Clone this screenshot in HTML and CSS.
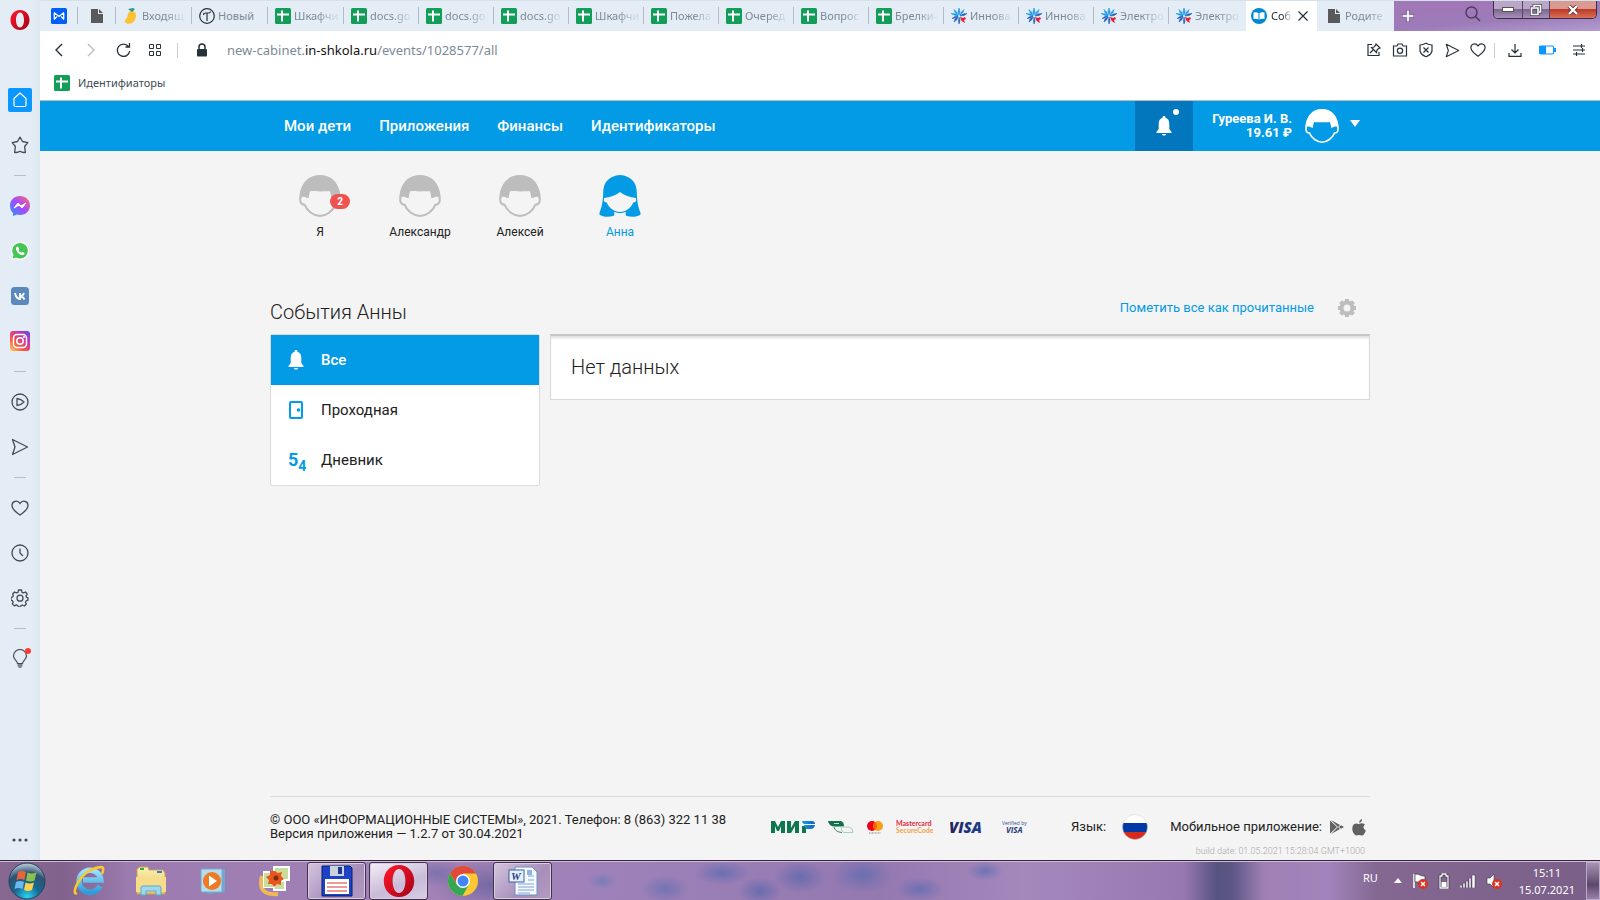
FILE: index.html
```html
<!DOCTYPE html>
<html lang="ru">
<head>
<meta charset="utf-8">
<title>События Анны</title>
<link rel="stylesheet" href="styles.css">
</head>
<body>
<svg class="defs" aria-hidden="true">
  <defs>
    <linearGradient id="g-opera" x1="0" y1="0" x2="1" y2="1"><stop offset="0" stop-color="#ff1b2d"/><stop offset="1" stop-color="#a70014"/></linearGradient>
    <linearGradient id="g-msg" x1="0" y1="1" x2="1" y2="0"><stop offset="0" stop-color="#1e9bff"/><stop offset=".5" stop-color="#a34bff"/><stop offset="1" stop-color="#ff6b6b"/></linearGradient>
    <linearGradient id="g-insta" x1="0" y1="1" x2=".9" y2="0"><stop offset="0" stop-color="#ffd25a"/><stop offset=".35" stop-color="#f9583f"/><stop offset=".7" stop-color="#c837ab"/><stop offset="1" stop-color="#6a4be0"/></linearGradient>
    <linearGradient id="g-mir" x1="0" x2="1"><stop offset="0" stop-color="#17a0e0"/><stop offset="1" stop-color="#1060c8"/></linearGradient>
    <linearGradient id="g-visa" x1="0" x2="1"><stop offset="0" stop-color="#20235c"/><stop offset="1" stop-color="#1f4090"/></linearGradient>
    <radialGradient id="g-orb" cx=".5" cy=".95" r=".9"><stop offset="0" stop-color="#27d6f8"/><stop offset=".4" stop-color="#17688f"/><stop offset=".75" stop-color="#2d5273"/><stop offset="1" stop-color="#a9bccb"/></radialGradient>
    <linearGradient id="g-ie" x1="0" y1="0" x2="0" y2="1"><stop offset="0" stop-color="#9fe3fb"/><stop offset="1" stop-color="#2d9ddb"/></linearGradient>
    <linearGradient id="g-folder" x1="0" y1="0" x2="0" y2="1"><stop offset="0" stop-color="#fbf0b4"/><stop offset="1" stop-color="#e6c25e"/></linearGradient>
  </defs>
  <symbol id="sheet" viewBox="0 0 16 16"><rect width="16" height="16" rx="1.5" fill="#129d58"/><path d="M7 2.500v11M2 6.500h12" stroke="#fff" stroke-width="2"/></symbol>
  <symbol id="doc" viewBox="0 0 16 16"><path d="M2 1h7v5h5v9H2zM10 1l4 4h-4z" fill="#58595b"/></symbol>
  <symbol id="star8" viewBox="0 0 16 16"><path d="M8 0l1 4-1 3-1-3zM0 5.500l5 .5 2 2-4-1zM3 1.500l3 3 1 3-3-3zM13 1.500l-1 3-3 3 1-3z" fill="#1a9be8" stroke="#1a9be8" stroke-width=".6"/><path d="M16 5.500l-3 2-4 .5 3-2zM3 14l1-3 3-2.500-1 3zM8 16l-.500-3 .500-4 1 4zM1 10.500l3-2 3-.500-3 2z" fill="#2060c0" stroke="#2060c0" stroke-width=".6"/><path d="M9 9l3 1 2-1 1 2-2 1 1 3-2-1-2-2z" fill="#e02030"/></symbol>
  <symbol id="send" viewBox="0 0 18 18"><path d="M1.500 1.500L16.500 9l-15 7.500 2.500-7.500z" fill="none" stroke="currentColor" stroke-width="1.300" stroke-linejoin="round"/></symbol>
  <symbol id="heart" viewBox="0 0 18 18"><path d="M9 16C6 14 1 10.500 1 6.300 1 2 6.500.500 9 4.500 11.500.500 17 2 17 6.300 17 10.500 12 14 9 16z" fill="none" stroke="currentColor" stroke-width="1.300"/></symbol>
  <symbol id="opera" viewBox="0 0 20 20"><path fill="url(#g-opera)" fill-rule="evenodd" d="M10 0c5.700 0 9.500 4.500 9.500 10s-3.800 10-9.500 10S.5 15.500.5 10 4.300 0 10 0zm0 2.500C7.500 2.500 6 6 6 10s1.500 7.500 4 7.500 4-3.500 4-7.500-1.500-7.500-4-7.500z"/></symbol>
  <symbol id="boy" viewBox="0 0 42 42"><path d="M21 1C9 1 1.500 10 1.200 25c0 2.500 1.800 4.500 4.300 4.700C8 36 15 41 21 41s13-5 15.500-11.300c2.500-.2 4.300-2.200 4.300-4.700C40.500 10 33 1 21 1z" fill="none" stroke="currentColor" stroke-width="2"/><path d="M21 .5C8 .5 1 10 .800 24c1-2 3-2.700 5-2 1.500.5 2.500 1.500 4 .8.300-3 .7-5.300 1.700-6.800 5 .5 14 .5 19 0 1 1.500 1.400 3.800 1.700 6.800 1.500.7 2.500-.3 4-.8 2-.7 4 0 5 2C41 10 34 .5 21 .5z" fill="currentColor"/></symbol>
  <symbol id="girl" viewBox="0 0 42 42"><path fill="currentColor" fill-rule="evenodd" d="M21 0C10 1 4.500 7 4.200 17 4 27 3 31 .3 38.500c0 2 4 3.200 8 3.200s6.700-.8 7-1.500v-3.500c3.500 1.800 8 1.800 11.400 0v3.500c.3.700 3 1.500 7 1.500s8-1.200 8-3.200C39 31 38 27 37.800 17 37.500 7 32 1 21 0zM5 23c6-.5 12-3 16-6 4 3 10 5.500 16 6v3c-.3 1-1.300 1.200-2.500 1.200C32 33 26.500 37 21 37S10 33 7.500 27.200C6.300 27.200 5.300 27 5 26z"/></symbol>
  <symbol id="bell" viewBox="0 0 16 20"><path fill="currentColor" d="M8 0c1 0 1.500.7 1.500 1.700C12.300 2.500 13.300 5 13.300 8v5L15.500 16v1H.5v-1l2.200-3V8c0-3 1-5.500 3.800-6.300C6.500.7 7 0 8 0zM6 18h4c0 2-4 2-4 0z"/></symbol>
  <symbol id="err" viewBox="0 0 10 10"><circle cx="5" cy="5" r="5" fill="#dd3322"/><path d="M3 3l4 4M7 3L3 7" stroke="#fff" stroke-width="1.500"/></symbol>
</svg>

<div class="browser">
  <aside class="rail">
    <div class="rail-logo"><svg width="20" height="20"><use href="#opera"/></svg></div>
    <button class="rail-item" aria-label="Домой"><span class="home"><svg width="16" height="16" viewBox="0 0 16 16"><path d="M8 1l6 5.500V13q0 1.500-1.500 1.500h-9Q2 14.500 2 13V6.500z" fill="none" stroke="#fff" stroke-width="1.200" stroke-linejoin="round"/></svg></span></button>
    <button class="rail-item" aria-label="Закладки"><svg width="18" height="18" viewBox="0 0 18 18"><path d="M9 1.200l2.500 4.300 5.300 1.200-3.200 3.800.8 5.800q-2.700.7-5.400-1-2.700 1.700-5.400 1l.8-5.800L1.200 6.700l5.300-1.200z" fill="none" stroke="currentColor" stroke-width="1.300" stroke-linejoin="round"/></svg></button>
    <hr>
    <button class="rail-item" aria-label="Messenger"><svg width="20" height="20" viewBox="0 0 20 20"><path d="M10 0c5.700 0 10 4 10 9.500S15.700 19 10 19c-1 0-2 0-3-.4L3 20v-3C1 15 0 12.500 0 9.500 0 4 4.300 0 10 0z" fill="url(#g-msg)"/><path d="M4 12l4-5 3 3 5-3-4 5-3-3z" fill="#fff" stroke="#fff"/></svg></button>
    <button class="rail-item" aria-label="WhatsApp"><svg width="18" height="18" viewBox="0 0 18 18"><path d="M0 18l1.300-4.500A9 9 0 1 1 5 17z" fill="#fff"/><path d="M1.500 16.500l1-3.500A7.800 7.800 0 1 1 5.300 15.600z" fill="#45c554"/><path d="M5.500 5l1.500-.5 1.200 2.500-.8 1q1 2 3 2.800l1-1 2.200 1.200q0 2-2 2.200Q6 12.500 5 7q0-1.200.5-2z" fill="#fff"/></svg></button>
    <button class="rail-item" aria-label="ВКонтакте"><svg width="18" height="18" viewBox="0 0 18 18"><rect width="18" height="18" rx="3.500" fill="#5b88bd"/><path d="M4 6q1 5.500 5 6V6M9 9.500q3-.5 4-3.500M9.500 9.500q2.500 0 4 3" fill="none" stroke="#fff" stroke-width="1.900"/></svg></button>
    <button class="rail-item" aria-label="Instagram"><svg width="20" height="20" viewBox="0 0 20 20"><rect width="20" height="20" rx="3" fill="url(#g-insta)"/><g fill="none" stroke="#fff" stroke-width="1.500"><rect x="3.500" y="3.500" width="13" height="13" rx="3.500"/><circle cx="10" cy="10" r="3.200"/></g><circle cx="14" cy="6" r="1" fill="#fff"/></svg></button>
    <hr>
    <button class="rail-item" aria-label="Плеер"><svg width="18" height="18" viewBox="0 0 18 18"><g fill="none" stroke="currentColor" stroke-width="1.300" stroke-linejoin="round"><circle cx="9" cy="9" r="8"/><path d="M6 5.500q4 .5 7 3.500-3 3-7 3.500z"/></g></svg></button>
    <button class="rail-item" aria-label="Flow"><svg width="18" height="18"><use href="#send"/></svg></button>
    <hr>
    <button class="rail-item" aria-label="Избранное"><svg width="18" height="18"><use href="#heart"/></svg></button>
    <button class="rail-item" aria-label="История"><svg width="18" height="18" viewBox="0 0 18 18"><g fill="none" stroke="currentColor" stroke-width="1.300"><circle cx="9" cy="9" r="8"/><path d="M9 4.500V9l3 3"/></g></svg></button>
    <button class="rail-item" aria-label="Настройки"><svg width="18" height="18" viewBox="0 0 18 18"><g fill="none" stroke="currentColor" stroke-width="1.300" stroke-linejoin="round"><path d="M7.500 1h3l.5 2.300 1.400.6L14.500 3l1.800 2.200-1.300 1.600.5 1.500 1.500.5v2.400l-2 .8-.5 1.300.8 1.700-2 2-2-1-1.300.6-.5 1.400h-2l-.8-1.500-1.400-.6-2 1-2-2 .9-1.700-.6-1.300-1.600-.8V8.500l1.800-.6.4-1.300L1.700 5 3.500 3l2 .9 1.500-.6z"/><circle cx="9" cy="9.200" r="3"/></g></svg></button>
    <hr>
    <button class="rail-item" aria-label="Подсказки"><span class="badge-wrap"><svg width="18" height="20" viewBox="0 0 18 20"><path d="M6.500 14.500C6.500 12 2.500 10.500 2.500 7a6.500 6.500 0 0 1 13 0c0 3.500-4 5-4 7.500z" fill="none" stroke="currentColor" stroke-width="1.200"/><path d="M6.500 15h5v2l-1.500 2H8l-1.500-2z" fill="#7b858d"/></svg><i class="dot-red"></i></span></button>
    <button class="rail-item rail-more" aria-label="Ещё"><svg width="16" height="4" viewBox="0 0 16 4" fill="currentColor"><circle cx="2" cy="2" r="1.600"/><circle cx="8" cy="2" r="1.600"/><circle cx="14" cy="2" r="1.600"/></svg></button>
  </aside>

  <div class="window">
    <div class="tabstrip">
      <nav class="tabs">
        <button class="tab pinned" aria-label="Почта"><svg width="16" height="16" viewBox="0 0 16 16"><rect width="16" height="16" rx="1.500" fill="#005ff9"/><path d="M3 4.500l5 4 5-4M3 11.500l3-3M13 11.500l-3-3M3.300 5v6M12.700 5v6" fill="none" stroke="#fff" stroke-width="1.300"/></svg></button>
        <button class="tab pinned" aria-label="Документ"><svg width="16" height="16"><use href="#doc"/></svg></button>
        <button class="tab roomy"><svg width="16" height="16" viewBox="0 0 16 16"><path d="M8 3c5-1 6 5 4 9s-8 5-10 2c-1-2 2-3 2.500-6S6 3.500 8 3z" fill="#fcc133"/><path d="M5 1l5-1 2 1-3 3z" fill="#2a9b8e"/></svg><span>Входящ</span></button>
        <button class="tab roomy"><svg width="16" height="16" viewBox="0 0 16 16"><g fill="none" stroke="#26323a" stroke-width="1.200"><circle cx="8" cy="8" r="7.300"/><path d="M8 5v8M4.500 7q0-2 2-2t3 0q2 0 2-1.500"/></g></svg><span class="full">Новый</span></button>
        <button class="tab roomy"><svg width="16" height="16"><use href="#sheet"/></svg><span>Шкафчи</span></button>
        <button class="tab"><svg width="16" height="16"><use href="#sheet"/></svg><span>docs.go</span></button>
        <button class="tab"><svg width="16" height="16"><use href="#sheet"/></svg><span>docs.go</span></button>
        <button class="tab"><svg width="16" height="16"><use href="#sheet"/></svg><span>docs.go</span></button>
        <button class="tab"><svg width="16" height="16"><use href="#sheet"/></svg><span>Шкафчи</span></button>
        <button class="tab"><svg width="16" height="16"><use href="#sheet"/></svg><span>Пожела</span></button>
        <button class="tab"><svg width="16" height="16"><use href="#sheet"/></svg><span>Очеред</span></button>
        <button class="tab"><svg width="16" height="16"><use href="#sheet"/></svg><span>Вопрос</span></button>
        <button class="tab"><svg width="16" height="16"><use href="#sheet"/></svg><span>Брелки-</span></button>
        <button class="tab"><svg width="16" height="16"><use href="#star8"/></svg><span>Иннова</span></button>
        <button class="tab"><svg width="16" height="16"><use href="#star8"/></svg><span>Иннова</span></button>
        <button class="tab"><svg width="16" height="16"><use href="#star8"/></svg><span>Электро</span></button>
        <button class="tab last"><svg width="16" height="16"><use href="#star8"/></svg><span>Электро</span></button>
        <button class="tab active"><svg width="16" height="16" viewBox="0 0 16 16"><circle cx="8" cy="8" r="8" fill="#0288d1"/><path d="M2.500 4.500q3-.5 5 .5v6.500q-2-1-5-.5zM13.500 4.500q-3-.5-5 .5v6.500q2-1 5-.5z" fill="#fff"/></svg><span>Соб</span><svg width="10" height="10" viewBox="0 0 10 10"><path d="M.5.5l9 9M9.500.5l-9 9" stroke="#26323a" stroke-width="1.200"/></svg></button>
        <button class="tab after"><svg width="16" height="16"><use href="#doc"/></svg><span>Родите</span></button>
      </nav>
      <div class="titlebar">
        <button class="plain" aria-label="Новая вкладка"><svg width="12" height="12" viewBox="0 0 12 12"><path d="M6 0v12M0 6h12" stroke="#5d4a78" stroke-width="4"/><path d="M6 .5v11M.5 6h11" stroke="#f2ecf6" stroke-width="2.500"/></svg></button>
        <button class="plain search" aria-label="Поиск"><svg width="16" height="16" viewBox="0 0 16 16"><g fill="none" stroke="#4a3c58" stroke-width="1.400"><circle cx="6.500" cy="6.500" r="5.500"/><path d="M10.500 10.500L15 15"/></g></svg></button>
        <div class="winctl">
          <button class="wmin" aria-label="Свернуть"><svg width="12" height="5" viewBox="0 0 12 5"><rect x=".5" y=".5" width="11" height="4" fill="#fff" stroke="#554"/></svg></button>
          <button class="wmax" aria-label="Развернуть"><svg width="12" height="12" viewBox="0 0 12 12"><g fill="none"><path d="M4 3V1.500h6.500V8H9M1.500 4H8v6.500H1.500z" stroke="#4b4354" stroke-width="3"/><path d="M4 3V1.500h6.500V8H9M1.500 4H8v6.500H1.500z" stroke="#fff" stroke-width="1.600"/></g></svg></button>
          <button class="wclose" aria-label="Закрыть"><svg width="12" height="10" viewBox="0 0 12 10"><path d="M2 1l8 8M10 1L2 9" stroke="#6b3038" stroke-width="4"/><path d="M2 1l8 8M10 1L2 9" stroke="#fff" stroke-width="2.400"/></svg></button>
        </div>
      </div>
    </div>

    <div class="toolbar">
      <button class="tool" aria-label="Назад"><svg width="16" height="16" viewBox="0 0 16 16"><path d="M11 2L5 8l6 6" fill="none" stroke="#26323a" stroke-width="1.400"/></svg></button>
      <button class="tool" aria-label="Вперёд"><svg width="16" height="16" viewBox="0 0 16 16"><path d="M5 2l6 6-6 6" fill="none" stroke="#b9bec3" stroke-width="1.400"/></svg></button>
      <button class="tool" aria-label="Обновить"><svg width="16" height="16" viewBox="0 0 16 16"><path d="M13.500 4.500A6.200 6.200 0 1 0 14.700 9M14.500 1v4H10.500" fill="none" stroke="#26323a" stroke-width="1.300"/></svg></button>
      <button class="tool" aria-label="Экспресс-панель"><svg width="14" height="14" viewBox="0 0 14 14"><path d="M1.500 1.500h4v4h-4zM8.500 1.500h4v4h-4zM1.500 8.500h4v4h-4zM8.500 8.500h4v4h-4z" fill="none" stroke="#26323a"/></svg></button>
      <i class="vline"></i>
      <svg class="lock" width="12" height="14" viewBox="0 0 12 14"><rect x="1" y="6" width="10" height="7.500" rx="1" fill="#26323a"/><path d="M3 6V4a3 3 0 0 1 6 0v2" fill="none" stroke="#26323a" stroke-width="1.500"/></svg>
      <div class="url">new-cabinet.<b>in-shkola.ru</b>/events/1028577/all</div>
      <div class="tools-right">
        <button class="small" aria-label="Закрепить"><svg width="16" height="16" viewBox="0 0 16 16"><g fill="none" stroke="#26323a" stroke-width="1.200"><path d="M6 2.500H2v11h11V10"/><path d="M4 11l3-3M10 2l4 4-1.500.5L11 8l-.5 2.500-5-5L8 5l1.500-1.500z"/></g></svg></button>
        <button class="small" aria-label="Снимок"><svg width="16" height="16" viewBox="0 0 16 16"><g fill="none" stroke="#26323a" stroke-width="1.200"><path d="M1.500 4H5l1-2h4l1 2h3.500v10h-13z"/><circle cx="8" cy="8.700" r="2.600"/></g></svg></button>
        <button class="small" aria-label="Защита"><svg width="16" height="16" viewBox="0 0 16 16"><g fill="none" stroke="#26323a" stroke-width="1.200"><path d="M2 3q3 0 6-1.700Q11 3 14 3v6q-1 4-6 5.700Q3 13 2 9zM5.500 5.500l5 5M10.500 5.500l-5 5"/></g></svg></button>
        <button class="small" aria-label="Отправить"><svg width="15" height="15"><use href="#send"/></svg></button>
        <button class="small" aria-label="В избранное"><svg width="16" height="16"><use href="#heart"/></svg></button>
        <i class="vline"></i>
        <button class="wide" aria-label="Загрузки"><svg width="14" height="14" viewBox="0 0 14 14"><path d="M7 1v8.500M3.500 6.500L7 10l3.500-3.500M1 10v3.300h12V10" fill="none" stroke="#26323a" stroke-width="1.200"/></svg></button>
        <button class="wide" aria-label="Батарея"><svg width="17" height="10" viewBox="0 0 17 10"><rect x=".6" y="1" width="14" height="8" rx="1.200" fill="#fff" stroke="#0a97ff" stroke-width="1.200"/><path d="M0 1h7v8H0zM15 3h2v4h-2z" fill="#0a97ff"/></svg></button>
        <button class="wide" aria-label="Быстрые настройки"><svg width="14" height="12" viewBox="0 0 14 12"><path d="M1 2h12M1 6h12M1 10h12M9.500 0v4M10.500 4v4M4.500 8v4" stroke="#26323a" stroke-width="1.200"/></svg></button>
      </div>
    </div>

    <div class="bookmarks"><a href="#"><svg width="16" height="16"><use href="#sheet"/></svg>Идентифиаторы</a></div>

    <div class="site">
      <header class="top">
        <div class="container top-row">
          <nav class="menu"><a href="#">Мои дети</a><a href="#">Приложения</a><a href="#">Финансы</a><a href="#">Идентификаторы</a></nav>
          <button class="notify" aria-label="Уведомления"><svg width="16" height="20"><use href="#bell"/></svg><i class="dot-white"></i></button>
          <button class="user"><span class="user-name">Гуреева И. В.<br>19.61 ₽</span><svg width="34" height="34"><use href="#boy"/></svg><svg class="caret" width="10" height="7" viewBox="0 0 10 7"><path d="M0 0h10L5 7z" fill="#fff"/></svg></button>
        </div>
      </header>

      <main class="container content">
        <nav class="people">
          <a href="#"><span class="badge-wrap"><svg width="42" height="42"><use href="#boy"/></svg><em class="count">2</em></span><span>Я</span></a>
          <a href="#"><svg width="42" height="42"><use href="#boy"/></svg><span>Александр</span></a>
          <a href="#"><svg width="42" height="42"><use href="#boy"/></svg><span>Алексей</span></a>
          <a href="#" class="current"><svg width="42" height="42"><use href="#girl"/></svg><span>Анна</span></a>
        </nav>
        <div class="heading">
          <h1>События Анны</h1>
          <div class="actions"><a href="#">Пометить все как прочитанные</a><button class="plain" aria-label="Настройки событий"><svg width="18" height="18" viewBox="0 0 18 18"><circle cx="9" cy="9" r="5.500" fill="none" stroke="#bdbdbd" stroke-width="4"/><path d="M9 0v3M9 15v3M0 9h3M15 9h3M2.600 2.600l2 2M13.400 13.400l2 2M15.400 2.600l-2 2M4.600 13.400l-2 2" stroke="#bdbdbd" stroke-width="4"/></svg></button></div>
        </div>
        <div class="columns">
          <nav class="filter">
            <a href="#" class="selected"><svg width="16" height="20"><use href="#bell"/></svg>Все</a>
            <a href="#"><svg width="16" height="20" viewBox="0 0 16 20"><rect x="2" y="2" width="12" height="16" rx="1" fill="none" stroke="#039be5" stroke-width="2"/><circle cx="10.500" cy="10" r="1.800" fill="#039be5"/></svg>Проходная</a>
            <a href="#"><span class="mark">5<sub>4</sub></span>Дневник</a>
          </nav>
          <section class="panel">Нет данных</section>
        </div>
      </main>

      <footer class="container foot">
        <div class="foot-row">
          <p>© ООО «ИНФОРМАЦИОННЫЕ СИСТЕМЫ», 2021. Телефон: 8 (863) 322 11 38<br>Версия приложения — 1.2.7 от 30.04.2021</p>
          <div class="pay">
            <svg width="44" height="14" viewBox="0 0 44 14"><g fill="#0f754e"><path d="M0 13V1h4l3 6 3-6h4v12h-4V6l-2 5H6L4 6v7zM16 13V1h4v7l4-7h4v12h-4V6l-4 7zM31 6h4v7h-4z"/></g><path d="M31 1h10q3 0 3 3H33q-2-1-2-3zM33 5h11q-1 4-4 4h-5z" fill="url(#g-mir)"/></svg>
            <svg width="26" height="14" viewBox="0 0 26 14"><path d="M0 1h12q4 0 4 5.500H7Q1 6.500 0 1z" fill="#12704e"/><path d="M13 7h8q4 1 4 5.500H16q-3-1-3-5.500" fill="none" stroke="#a9d0bd"/><path d="M6 7q1 5 8 5.500" fill="none" stroke="#2f8a66"/><path d="M6 3.500h5" stroke="#c3ded0"/></svg>
            <svg width="16" height="14" viewBox="0 0 16 14"><circle cx="5" cy="6" r="5" fill="#eb001b"/><circle cx="11" cy="6" r="5" fill="#f79e1b"/><path d="M8 2a5 5 0 0 1 0 8 5 5 0 0 1 0-8z" fill="#ff5f00"/><path d="M2 13h12" stroke="#888" stroke-dasharray="1 .500"/></svg>
            <svg width="40" height="14" viewBox="0 0 40 14"><text x="0" y="6" class="mc" fill="#e5263a">Mastercard</text><text x="0" y="13" class="mc" fill="#f4a04a">SecureCode</text></svg>
            <svg width="40" height="14" viewBox="0 0 40 14"><text x="0" y="13" class="visa" fill="url(#g-visa)">VISA</text></svg>
            <svg width="28" height="14" viewBox="0 0 28 14"><text x="0" y="5" class="vb" fill="#2b4a86">Verified by</text><text x="4" y="13" class="visa-s" fill="#23397a">VISA</text></svg>
          </div>
          <div class="lang">Язык: <button class="plain" aria-label="Русский"><svg width="26" height="26" viewBox="0 0 26 26"><clipPath id="c-flag"><circle cx="13" cy="13" r="12.500"/></clipPath><g clip-path="url(#c-flag)"><path d="M0 0h26v9H0z" fill="#fff"/><path d="M0 9h26v9H0z" fill="#0039a6"/><path d="M0 18h26v8H0z" fill="#d52b1e"/></g><circle cx="13" cy="13" r="12.500" fill="none" stroke="#ccc" stroke-width=".5"/></svg></button></div>
          <div class="apps">Мобильное приложение:
            <a href="#" aria-label="Google Play"><svg width="14" height="16" viewBox="0 0 14 16"><path d="M1 1l9 5-2 2zM0 1.500L7 8l-7 6.500zM1 15l9-5-2-2zM11 6.300L14 8l-3 1.700L9 8z" fill="#616161"/></svg></a>
            <a href="#" aria-label="App Store"><svg width="14" height="17" viewBox="0 0 14 17"><path d="M10 0q.2 2.800-2.800 4Q7 1.200 10 0zM7 5q3-1.500 6 .5-3.500 3 .8 6-1.800 5-3.800 5L7 16l-3 .5Q1 15 .3 10.500 0 5 4 4.500z" fill="#616161"/></svg></a>
          </div>
        </div>
        <div class="build">build date: 01.05.2021 15:28:04 GMT+1000</div>
      </footer>
    </div>
  </div>
</div>

<div class="taskbar">
  <button class="start" aria-label="Пуск"><svg width="38" height="38" viewBox="0 0 38 38"><circle cx="19" cy="19" r="18" fill="url(#g-orb)" stroke="#20445e"/><path d="M10 10q4-2 8 0l-1.500 8q-4-2-8 0z" fill="#e8623a"/><path d="M19.500 10.500q4 2 9 0l-2 8q-4 2-8.500 0z" fill="#8cc152"/><path d="M8 20q4-2 8 0l-1.500 7q-4-2-8 0z" fill="#6fb7ee"/><path d="M17.500 20.500q4 2 8.500 0l-2 7.500q-4 2-8 0z" fill="#fbd04d"/></svg></button>
  <button class="task" aria-label="Internet Explorer"><svg width="32" height="32" viewBox="0 0 32 32"><path d="M27 21a11 11 0 1 1 1-6H10" fill="none" stroke="url(#g-ie)" stroke-width="5.500"/><path d="M4 28C-3 32 6 4 28 2q4 0 1 7" fill="none" stroke="#f8c82e" stroke-width="2.500"/></svg></button>
  <button class="task" aria-label="Проводник"><svg width="32" height="30" viewBox="0 0 32 30"><path d="M2 3l3-2h8l1 3h14l2 3v21H2z" fill="url(#g-folder)" stroke="#c8a54a"/><path d="M5 2h4v2H5z" fill="#39a845"/><path d="M22 5h5v2h-5z" fill="#3a7bd0"/><path d="M1 11h30v15H1z" fill="#f5dd8c"/><path d="M6 29v-7q0-2 2-2h16q2 0 2 2v7h-5v-4H11v4z" fill="#9fd8ee" stroke="#5aa8c8"/></svg></button>
  <button class="task" aria-label="Проигрыватель"><svg width="28" height="28" viewBox="0 0 28 28"><path d="M6 3l20-1v23L8 27z" fill="#6fa9cf"/><rect x="2" y="2" width="21" height="23" rx="1" fill="#b7dcee" stroke="#73abcb"/><circle cx="13" cy="14" r="9" fill="#f07a22"/><path d="M10 8.500l8 5.500-8 5.500z" fill="#fff"/></svg></button>
  <button class="task" aria-label="Галерея"><svg width="32" height="32" viewBox="0 0 32 32"><path d="M3 11q-5 20 16 18" fill="none" stroke="#f2ba57" stroke-width="4"/><rect x="4" y="6" width="13" height="17" fill="#fff"/><rect x="14" y="1" width="17" height="15" fill="#fff"/><rect x="14" y="16" width="13" height="10" fill="#fff"/><path d="M5 8h9v14H5zM16 3h13v11H16zM16 17h9v7h-9z" fill="#c9dc9c"/><path d="M16 6l3 2 4-1-1 4 3 3-3 2 0 4-4-1-3 3-2-3-4 0 1-4-3-3 4-2 0-4z" fill="#e9561d"/><circle cx="17" cy="13" r="2.500" fill="#7c2f10"/></svg></button>
  <button class="task framed first" aria-label="Total Commander"><svg width="32" height="32" viewBox="0 0 32 32"><path d="M1 1h28l2 2v28H1z" fill="#1d43c4" stroke="#0a1f6b"/><rect x="9" y="1" width="14" height="10" fill="#ccd2dc"/><rect x="17" y="2" width="4" height="7" fill="#1d3a90"/><rect x="4" y="14" width="24" height="15" fill="#fff"/><path d="M6 18h20M6 22h20M6 26h20" stroke="#d33"/></svg></button>
  <button class="task framed lit" aria-label="Opera"><svg width="32" height="32"><use href="#opera"/></svg></button>
  <button class="task" aria-label="Chrome"><svg width="30" height="30" viewBox="0 0 30 30"><circle cx="15" cy="15" r="15" fill="#fcc934"/><path d="M2 7.500A15 15 0 0 1 28 7.500H15L9 18z" fill="#e04a3a"/><path d="M2 7.500A15 15 0 0 0 14.500 30L21 18.500 9 18.500z" fill="#34a853"/><circle cx="15" cy="15" r="7" fill="#fff"/><circle cx="15" cy="15" r="5.500" fill="#4285f4"/></svg></button>
  <button class="task framed" aria-label="Word"><svg width="30" height="30" viewBox="0 0 30 30"><path d="M7 1h17l5 5v23H7z" fill="#f6faff" stroke="#6d8fc4"/><path d="M10 18h16M10 21h16M10 24h16M10 27h12M20 10h6M20 14h6" stroke="#7da2d8"/><path d="M19 4h5v5h-5z" fill="#8fb4e4"/><rect x="1" y="4" width="15" height="12" fill="#e8f0fb" stroke="#3a5fa8"/><text x="3" y="14" class="word">W</text></svg></button>
  <div class="tray">
    <span class="ru">RU</span>
    <svg width="8" height="5" viewBox="0 0 8 5"><path d="M4 0l4 5H0z" fill="#fff"/></svg>
    <svg width="16" height="16" viewBox="0 0 16 16"><path d="M2 1v14" stroke="#fff" stroke-width="1.500"/><path d="M3 1q4 0 5 1t5 1v6H3z" fill="#fff" stroke="#333" stroke-width=".7"/><use href="#err" x="6" y="6" width="10" height="10"/></svg>
    <svg width="12" height="16" viewBox="0 0 12 16"><path d="M2 3h2V1h4v2h2v12H2z" fill="none" stroke="#2b2333" stroke-width="2.500"/><path d="M2 3h2V1h4v2h2v12H2z" fill="none" stroke="#fff" stroke-width="1.300"/><path d="M3.500 9h5v5h-5z" fill="#fff"/></svg>
    <svg width="16" height="14" viewBox="0 0 16 14"><path d="M0 11h2v3H0zM3 9h2v5H3zM6 7h2v7H6zM9 4h2v10H9zM12 1h3v13h-3z" fill="#fff" stroke="#3a2f45" stroke-width=".5"/></svg>
    <svg width="16" height="16" viewBox="0 0 16 16"><path d="M1 5h3l4-4v14l-4-4H1z" fill="#fff" stroke="#3a2f45" stroke-width=".6"/><use href="#err" x="6" y="6" width="10" height="10"/></svg>
    <time class="clock">15:11<br>15.07.2021</time>
  </div>
  <button class="desktop" aria-label="Показать рабочий стол"></button>
</div>
</body>
</html>
```
FILE: styles.css
```css
* { box-sizing: border-box; }
body {
  margin: 0;
  min-height: 100vh;
  display: flex;
  flex-direction: column;
  font-family: Roboto, "Noto Sans", sans-serif;
  color: #212121;
  background: #f4f4f4;
}
button { border: 0; padding: 0; background: none; font: inherit; color: inherit; }
a { color: inherit; text-decoration: none; }
svg { display: block; flex: none; }
.defs { position: absolute; width: 0; height: 0; }
.plain { display: flex; align-items: center; justify-content: center; }

.browser { flex: 1; display: flex; }

/* Side rail */
.rail {
  flex: none;
  width: 40px;
  display: flex;
  flex-direction: column;
  background: linear-gradient(90deg, #e4edf5 80%, #dde7ee);
  color: #414c55;
}
.rail-logo { height: 77px; padding: 10px; }
.rail-item { height: 45px; display: flex; align-items: center; justify-content: center; }
.rail hr { width: 12px; height: 1px; margin: 8px auto 7px; border: 0; background: #b3c1cc; }
.rail-more { margin-top: auto; margin-bottom: -2px; }
.home {
  width: 24px;
  height: 24px;
  display: flex;
  align-items: center;
  justify-content: center;
  border-radius: 2px;
  background: #0a97ff;
}
.badge-wrap { position: relative; }
.dot-red { position: absolute; top: -1px; right: -2px; width: 6px; height: 6px; border-radius: 50%; background: #ff3b30; }

/* Tabs */
.window { flex: 1; min-width: 0; display: flex; flex-direction: column; }
.tabstrip { display: flex; height: 31px; background: #e4edf5; border-top: 1px solid #d5e0e8; }
.tabs { display: flex; flex: none; font: 11px/16px "Noto Sans", sans-serif; color: #7c8a97; }
.tab {
  position: relative;
  width: 75px;
  display: flex;
  align-items: center;
  gap: 3px;
  padding: 0 3px 1px 7px;
}
.tab::after { content: ""; position: absolute; right: 0; top: 6px; width: 1px; height: 17px; background: #b0bcc6; }
.tab.pinned { width: 38px; padding-left: 11px; }
.tab.roomy { width: 76px; }
.tab.last, .tab.after { width: 77px; }
.tab.last::after, .tab.active::after, .tab.after::after { display: none; }
.tab span {
  flex: 1;
  min-width: 0;
  text-align: left;
  white-space: nowrap;
  -webkit-mask-image: linear-gradient(90deg, #000 50%, #0003 85%);
  mask-image: linear-gradient(90deg, #000 50%, #0003 85%);
}
.tab span.full { -webkit-mask-image: none; mask-image: none; }
.tab.active { width: 71px; padding: 0 9px 1px 5px; background: #fff; color: #26323a; gap: 4px; }
.tab.after { padding-left: 9px; }
.titlebar {
  flex: 1;
  display: flex;
  align-items: flex-start;
  padding: 0 3px 0 8px;
  background: linear-gradient(175deg, #a078b8 30%, #9c7cb8 60%, #b49bd0);
}
.titlebar .plain { height: 29px; }
.titlebar .search { height: 26px; margin-left: auto; margin-right: 12px; }
.winctl { display: flex; height: 18px; border: 1px solid #3b2f47; border-top: 0; border-radius: 0 0 5px 5px; overflow: hidden; }
.winctl button { display: flex; align-items: center; justify-content: center; border-right: 1px solid #54465f; background: linear-gradient(#b9a6c8 45%, #7b668f 50%, #a791bb); }
.winctl .wmin { width: 29px; }
.winctl .wmax { width: 27px; }
.winctl .wclose { width: 46px; border: 0; background: linear-gradient(#d99a94 45%, #bd3a24 50%, #d9705a); }

/* Address bar */
.toolbar { display: flex; align-items: center; height: 38px; padding: 0 5px 0 3px; background: #fff; color: #26323a; }
.tool, .wide { width: 32px; height: 32px; display: flex; align-items: center; justify-content: center; }
.small { width: 26px; height: 32px; display: flex; align-items: center; justify-content: center; }
.vline { width: 1px; height: 15px; background: #c9ced3; }
.toolbar > .vline { margin: 0 18px 0 6px; }
.lock { margin-right: 19px; }
.url { font: 13px/20px "Noto Sans", sans-serif; color: #7c8a97; }
.url b { font-weight: 400; color: #111; }
.tools-right { display: flex; align-items: center; margin-left: auto; }
.tools-right .vline { margin: 0 4px 0 3px; }
.bookmarks { height: 32px; padding: 0 14px; background: #fff; border-bottom: 1px solid #b4bbc1; }
.bookmarks a { display: flex; align-items: center; gap: 8px; width: max-content; height: 28px; font: 11px/16px "Noto Sans", sans-serif; color: #404b54; }

/* Site */
.site { flex: 1; display: flex; flex-direction: column; background: #f4f4f4; }
.container { width: 100%; max-width: 1100px; margin: 0 auto; }
.top { background: #039be5; color: #fff; }
.top-row { display: flex; height: 50px; }
.menu { display: flex; align-items: center; gap: 28px; margin-right: auto; padding-left: 14px; font-size: 15px; font-weight: 500; }
.notify { position: relative; width: 58px; display: flex; align-items: center; justify-content: center; background: #0277bd; }
.dot-white { position: absolute; top: 8px; right: 14px; width: 6px; height: 6px; border-radius: 50%; background: #fff; }
.user { display: flex; align-items: center; padding: 0 10px 0 19px; }
.user-name { margin-right: 13px; font-size: 13px; font-weight: 700; line-height: 14px; text-align: right; }
.caret { margin: 0 0 5px 11px; }

.people { display: flex; height: 135px; padding-top: 24px; }
.people a { width: 100px; display: flex; flex-direction: column; align-items: center; gap: 7px; font-size: 12px; line-height: 16px; }
.people svg { color: #bdbdbd; }
.people .current, .people .current svg { color: #039be5; }
.count { position: absolute; left: 31px; top: 19px; width: 20px; height: 15px; border-radius: 8px; background: #ef5350; color: #fff; font: 700 10px/15px Roboto, sans-serif; text-align: center; }

.heading { display: flex; justify-content: space-between; height: 48px; padding-right: 14px; }
.heading h1 { margin: 0; padding-top: 14px; font-size: 20px; line-height: 24px; font-weight: 300; }
.actions { display: flex; align-items: center; gap: 24px; height: 43px; font-size: 13px; color: #039be5; }
.columns { display: grid; grid-template-columns: 270px 1fr; gap: 10px; align-items: start; }
.filter { border: 1px solid #dadada; border-radius: 2px; background: #fff; }
.filter a { display: flex; align-items: center; gap: 17px; height: 50px; padding-left: 17px; font-size: 15px; }
.filter .selected { background: #039be5; color: #fff; font-weight: 500; }
.mark { width: 16px; font-size: 18px; font-weight: 700; line-height: 24px; color: #039be5; white-space: nowrap; }
.mark sub { font-size: 14px; line-height: 0; }
.panel { padding: 20px; border: 1px solid #dadada; border-top: 2px solid #c6c6c6; background: #fff; box-shadow: inset 0 3px 3px -1px #ddd; font-size: 20px; line-height: 23px; font-weight: 300; }

.foot { margin-top: auto; border-top: 1px solid #dadada; font-size: 13px; line-height: 14px; }
.foot-row { display: flex; align-items: center; height: 46px; padding: 14px 4px 0 0; }
.foot p { margin: 0 auto 0 0; }
.pay { display: flex; align-items: center; gap: 13px; margin-right: 41px; }
.lang { display: flex; align-items: center; gap: 16px; margin-right: 22px; }
.apps { display: flex; align-items: center; gap: 8px; }
.build { height: 17px; padding: 2px 5px 0 0; font-size: 9px; line-height: 12px; font-weight: 300; color: #a6a6a6; text-align: right; }
.mc { font: 700 7px Lato, sans-serif; }
.visa { font: italic 800 15px "Open Sans", sans-serif; }
.visa-s { font: italic 700 8px "Open Sans", sans-serif; }
.vb { font: 5px "Open Sans", sans-serif; }
.word { font: italic 700 11px "Liberation Serif", serif; fill: #1f3f8a; }

/* Taskbar */
.taskbar {
  display: flex;
  align-items: center;
  height: 40px;
  border-top: 1px solid #33273e;
  box-shadow: inset 0 1px #cdb9d8;
  background:
    radial-gradient(ellipse 30px 14px at 437px 12px, #6a6aa8aa, transparent),
    radial-gradient(ellipse 60px 26px at 490px 24px, #5f5c98aa, transparent),
    radial-gradient(ellipse 14px 8px at 602px 20px, #6679b8aa, transparent),
    radial-gradient(ellipse 24px 14px at 665px 28px, #5a6cb099, transparent),
    radial-gradient(ellipse 28px 12px at 722px 12px, #4f66b099, transparent),
    radial-gradient(ellipse 22px 14px at 760px 30px, #4a62ac99, transparent),
    radial-gradient(ellipse 26px 16px at 800px 16px, #4a62ac99, transparent),
    radial-gradient(ellipse 30px 18px at 862px 14px, #5068b099, transparent),
    radial-gradient(ellipse 24px 12px at 920px 28px, #5068b099, transparent),
    radial-gradient(ellipse 18px 10px at 985px 10px, #5068b099, transparent),
    linear-gradient(90deg, #866890, #80628c 4%, #9b7bb0 8%, #a483b8 30%, #9c80b8 40%, #9478b0 55%, #a488bc 64%, #9878b0 74%, #575482 76%, #5c5684 77%, #a080b4 79%, #a284bc 83%, #846892 86%, #7a5f88);
}
.start { width: 54px; padding-left: 8px; }
.task { width: 62px; height: 36px; display: flex; align-items: center; justify-content: center; padding-left: 8px; }
.task.framed { width: 59px; height: 38px; margin-left: 3px; padding: 0; border: 1px solid #41324d; border-radius: 3px; box-shadow: inset 0 0 0 1px #d9cce2; background: linear-gradient(135deg, #d4c6de, #a88fba 60%, #b29ac2); }
.task.first { margin-left: 5px; }
.task.lit { background: linear-gradient(160deg, #f3eff6, #c9bad8 60%, #d9cde4); }
.tray { display: flex; align-items: center; gap: 10px; margin-left: auto; margin-right: 11px; color: #fff; font: 11px/20px "Noto Sans", sans-serif; }
.ru { margin-right: 6px; padding-bottom: 6px; }
.clock { margin-left: 7px; line-height: 17px; text-align: center; }
.desktop { width: 14px; height: 38px; border: 1px solid #bda9c8; background: linear-gradient(#a893b4, #5c4869 60%, #9a80ac); }
```
